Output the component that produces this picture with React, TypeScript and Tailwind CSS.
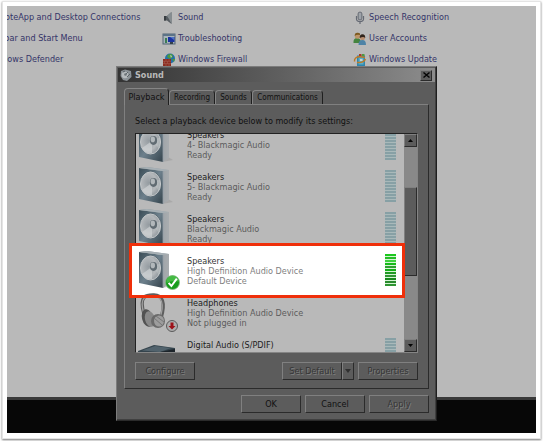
import type { ReactNode } from "react";

function SpeakerIcon() {
  return (
    <svg width="36" height="40" viewBox="0 0 36 40" aria-hidden="true">
      <defs>
        <linearGradient id="face" x1="0" y1="0" x2="1" y2="1">
          <stop offset="0" stopColor="#3a4c56" />
          <stop offset="0.5" stopColor="#6d808c" />
          <stop offset="1" stopColor="#34434c" />
        </linearGradient>
        <linearGradient id="side" x1="0" y1="0" x2="1" y2="0">
          <stop offset="0" stopColor="#7c878d" />
          <stop offset="1" stopColor="#a9adb0" />
        </linearGradient>
        <radialGradient id="cone" cx="0.4" cy="0.45" r="0.65">
          <stop offset="0" stopColor="#959ca1" />
          <stop offset="0.6" stopColor="#b4b8bb" />
          <stop offset="1" stopColor="#8a9298" />
        </radialGradient>
      </defs>
      <path d="M30 33 L35 36 L24 38 Z" fill="#8f8f8f" opacity="0.4" />
      <path d="M1 2 L9 1 L31 4 L31 34 L25 38 L25 5 Z" fill="url(#side)" />
      <path d="M1 2 L25 5 L25 38 L1 33 Z" fill="url(#face)" />
      <path d="M1 2 L9 1 L31 4 L25 5 Z" fill="#a7b0b5" />
      <path d="M25 5 L25 38" stroke="#94a0a7" strokeWidth="0.8" />
      <ellipse cx="13" cy="18" rx="10.5" ry="12.5" fill="#5a6871" />
      <ellipse cx="12.5" cy="18" rx="10" ry="12" fill="url(#cone)" stroke="#c3c7c9" strokeWidth="1" />
      <path d="M14 17 L4 24 A10 12 0 0 0 14 29 Z" fill="#d5d8da" opacity="0.6" />
      <path d="M15 17 L22 13 A10 12 0 0 1 21 25 Z" fill="#cfd3d5" opacity="0.35" />
      <ellipse cx="15.5" cy="16.5" rx="3.6" ry="4.4" fill="#606b72" />
      <ellipse cx="14.8" cy="15.4" rx="2.2" ry="2.8" fill="#b2b8bb" />
    </svg>
  );
}

function CheckBadge() {
  return (
    <svg className="absolute right-[-6px] bottom-0" width="15" height="15" viewBox="0 0 15 15" aria-hidden="true">
      <circle cx="7.5" cy="7.5" r="7" fill="#179c1c" stroke="#8ab88c" strokeWidth="0.8" />
      <path d="M1.5 6.5 A6 6 0 0 1 13.5 6.5 Q7 5 1.5 8 Z" fill="#58c754" opacity="0.7" />
      <path d="M3.6 7.8 L6.4 11 L11.8 3.6" fill="none" stroke="#fff" strokeWidth="2" />
    </svg>
  );
}

function HeadphonesIcon() {
  return (
    <svg width="40" height="40" viewBox="0 0 40 40" aria-hidden="true">
      <path d="M6 22 C0 2 10 3 16 3 C24 3 28 10 23 26" fill="none" stroke="#5e5e5e" strokeWidth="3.4" />
      <path d="M6 22 C0 3 10 4 16 4 C23 4 27 11 22 26" fill="none" stroke="#a2a2a2" strokeWidth="1.2" />
      <ellipse cx="9.500" cy="26" rx="5.500" ry="9" fill="#525252" transform="rotate(-14 9.500 26)" />
      <ellipse cx="12" cy="27" rx="5" ry="8" fill="#898989" transform="rotate(-14 12 27)" />
      <ellipse cx="20" cy="29" rx="7" ry="7" fill="#6a6a6a" />
      <ellipse cx="21" cy="29" rx="5" ry="5.500" fill="#9d9d9d" />
      <path d="M16 26 L24 33 M18 24 L26 30" stroke="#777" strokeWidth="1" />
      <circle cx="34" cy="34" r="5.500" fill="#adadad" stroke="#5b5b5b" strokeWidth="1" />
      <path d="M32.500 30.500 H35.500 V34 H37.500 L34 37.500 L30.500 34 H32.500 Z" fill="#9d1219" />
    </svg>
  );
}

function ReceiverIcon() {
  return (
    <svg width="38" height="40" viewBox="0 0 38 40" aria-hidden="true">
      <path d="M0 17 L16 11 L37 14 L37 18 L0 20 Z" fill="#35444d" />
      <path d="M4 16.500 L17 12 L33 14 L22 18 Z" fill="#52636d" />
      <path d="M0 18 L22 18 L37 15 V40 H0 Z" fill="#1d242a" />
    </svg>
  );
}

const idleBars = Array.from({ length: 11 }, () => "bg-[#87a0a5]");
const liveBars = [
  "bg-[#1cc81f]", "bg-[#25bd27]", "bg-[#3fd23f]", "bg-[#16bb19]", "bg-[#2f9f31]", "bg-[#12b016]",
  "bg-[#219a24]", "bg-[#2f9533]", "bg-[#17891b]", "bg-[#2a8a2e]", "bg-[#2e9432]",
];

function Meter({ live }: { live?: boolean }) {
  return (
    <div className={`flex h-8 w-[11px] flex-col justify-between ${live ? "bg-[#d4f5d4]" : "bg-[#a9b9ba]"}`} aria-hidden="true">
      {(live ? liveBars : idleBars).map((c, i) => (
        <span key={i} className={`h-[2px] w-full ${c}`} />
      ))}
    </div>
  );
}

type Device = { name: string; detail: string; status: string; icon: ReactNode; live?: boolean; meter?: boolean };

const devices: Device[] = [
  { name: "Speakers", detail: "4- Blackmagic Audio", status: "Ready", icon: <SpeakerIcon />, meter: true },
  { name: "Speakers", detail: "5- Blackmagic Audio", status: "Ready", icon: <SpeakerIcon />, meter: true },
  { name: "Speakers", detail: "Blackmagic Audio", status: "Ready", icon: <SpeakerIcon />, meter: true },
  { name: "Speakers", detail: "High Definition Audio Device", status: "Default Device", icon: <SpeakerIcon />, live: true, meter: true },
  { name: "Headphones", detail: "High Definition Audio Device", status: "Not plugged in", icon: <HeadphonesIcon /> },
  { name: "Digital Audio (S/PDIF)", detail: "", status: "", icon: <ReceiverIcon />, meter: true },
];

function DeviceRow({ device }: { device: Device }) {
  return (
    <li className="flex h-[42px] shrink-0 items-start gap-2 pr-2 pl-[2px]">
      <div className="relative h-10 w-10 shrink-0">
        <div className="relative w-[36px]">
          {device.icon}
          {device.live && <CheckBadge />}
        </div>
      </div>
      <div className="ml-px grow pt-[6px] leading-[10px] whitespace-nowrap">
        <p className={device.live ? "text-[#333]" : "text-[#1c1c1c]"}>{device.name}</p>
        <p className={device.live ? "text-[#808080]" : "text-[#5c5c5c]"}>{device.detail}</p>
        <p className={device.live ? "text-[#808080]" : "text-[#5c5c5c]"}>{device.status}</p>
      </div>
      {device.meter && (
        <div className="pt-1">
          <Meter live={device.live} />
        </div>
      )}
    </li>
  );
}

const raised = "border border-t-[#808080] border-l-[#808080] border-r-[#2b2b2b] border-b-[#2b2b2b] bg-[#5c5c5c]";

function PushButton({ children, disabled }: { children: ReactNode; disabled?: boolean }) {
  return (
    <button
      type="button"
      disabled={disabled}
      className={`h-[18px] w-[60px] leading-[10px] ${raised} ${disabled ? "text-[#363636] [text-shadow:1px_1px_0_#808080]" : "text-[#111]"}`}
    >
      {children}
    </button>
  );
}

function ScrollButton({ up }: { up?: boolean }) {
  return (
    <button type="button" aria-label={up ? "Scroll up" : "Scroll down"} className={`flex h-[13px] w-[13px] shrink-0 items-center justify-center ${raised}`}>
      <svg width="5" height="3" viewBox="0 0 5 3" aria-hidden="true">
        <path d={up ? "M0 3 L2.500 0 L5 3 Z" : "M0 0 L2.500 3 L5 0 Z"} fill="#050505" />
      </svg>
    </button>
  );
}

function SoundDialog() {
  return (
    <section
      aria-label="Sound"
      className="absolute top-[60px] left-[109px] w-[321px] border border-t-[#7c7c7c] border-r-[#1f1f1f] border-b-[#2b2b2b] border-l-[#7c7c7c] bg-[#5c5c5c] p-px shadow-[inset_-1px_-1px_0_#404040] text-[#111]"
    >
      <header className="flex h-[14px] items-center gap-[3px] bg-linear-to-r from-[#343434] to-[#8c8c8c] pr-[3px] pl-[2px]">
        <svg width="12" height="12" viewBox="0 0 12 12" aria-hidden="true">
          <path d="M1 2 L5 0.500 L11 2 L11.500 8 L7 12 L3 11 L0.500 7 Z" fill="#8b9297" />
          <circle cx="5" cy="6" r="3.300" fill="#b5babd" />
          <path d="M5 6 L8 3 M7 8 L10 5 M3 3 L5 2" stroke="#5b6368" strokeWidth="1" />
          <circle cx="5.500" cy="5.500" r="1.300" fill="#6b7378" />
        </svg>
        <h1 className="grow text-[9px] leading-[14px] font-bold text-[#b9b9b9]">Sound</h1>
        <button type="button" aria-label="Close" className={`flex h-[11px] w-3 items-center justify-center ${raised}`}>
          <svg width="7" height="6" viewBox="0 0 7 6" aria-hidden="true">
            <path d="M0.500 0.500 L6.500 5.500 M6.500 0.500 L0.500 5.500" stroke="#050505" strokeWidth="1.400" />
          </svg>
        </button>
      </header>

      <div className="px-[6px] pt-[6px] pb-[6px]">
        <div role="tablist" className="flex h-4 items-end text-[8px] leading-[10px]">
          <button type="button" role="tab" aria-selected="true" className="relative z-10 -mb-px h-[17px] w-[45px] rounded-t-sm border border-b-0 border-t-[#858585] border-r-[#1f1f1f] border-l-[#858585] bg-[#5c5c5c] pb-px text-[9px]">
            Playback
          </button>
          {[
            ["Recording", "w-[46px]"],
            ["Sounds", "w-[37px]"],
            ["Communications", "w-[71px]"],
          ].map(([label, width]) => (
            <button key={label} type="button" role="tab" aria-selected="false" className={`h-[14px] rounded-t-sm border border-b-0 border-t-[#858585] border-r-[#1f1f1f] border-l-[#858585] bg-[#5c5c5c] ${width}`}>
              {label}
            </button>
          ))}
        </div>

        <div role="tabpanel" className="border border-t-[#808080] border-r-[#2b2b2b] border-b-[#2b2b2b] border-l-[#808080] px-[10px] pt-[11px] pb-2">
          <p className="leading-[10px] whitespace-nowrap">Select a playback device below to modify its settings:</p>

          <div className="relative mt-[7px] flex h-[220px] border border-t-[#222] border-r-[#858585] border-b-[#858585] border-l-[#222] bg-[#b9b9b9]">
            <div className="absolute top-[110px] -left-[6px] h-[53px] w-[273px] bg-white" />
            <div className="relative grow overflow-hidden">
              <ul className="-mt-[10px] flex flex-col">
                {devices.map((device, i) => (
                  <DeviceRow key={i} device={device} />
                ))}
              </ul>
            </div>
            <div className="flex w-[13px] flex-col bg-[#898989]">
              <ScrollButton up />
              <div className="h-10" />
              <div className={`h-[89px] ${raised}`} />
              <div className="grow" />
              <ScrollButton />
            </div>
            <div className="absolute top-[109px] -left-[7px] h-[55px] w-[276px] border-[3px] border-[#ef2f0a]" />
          </div>

          <div className="mt-[9px] flex justify-between">
            <PushButton disabled>Configure</PushButton>
            <div className="flex gap-1">
              <div className="flex">
                <PushButton disabled>Set Default</PushButton>
                <button type="button" disabled aria-label="Set Default options" className={`flex h-[18px] w-3 items-center justify-center ${raised}`}>
                  <svg width="6" height="4" viewBox="0 0 6 4" aria-hidden="true">
                    <path d="M0 0 H6 L3 4 Z" fill="#303030" />
                  </svg>
                </button>
              </div>
              <PushButton disabled>Properties</PushButton>
            </div>
          </div>
        </div>

        <footer className="mt-[6px] flex justify-end gap-1">
          <PushButton>OK</PushButton>
          <PushButton>Cancel</PushButton>
          <PushButton disabled>Apply</PushButton>
        </footer>
      </div>
    </section>
  );
}

function SoundLinkIcon() {
  return (
    <svg width="14" height="14" viewBox="0 0 14 14" aria-hidden="true">
      <path d="M2 5 H5 L9.500 1 V13 L5 9.500 H2 Z" fill="#565c61" />
      <path d="M5 5 L9.500 1 V13 L7 8 Z" fill="#868d91" />
      <path d="M2 5 H4 V9.500 H2 Z" fill="#383d41" />
    </svg>
  );
}

function TroubleshootingIcon() {
  return (
    <svg width="14" height="14" viewBox="0 0 14 14" aria-hidden="true">
      <rect x="1" y="2" width="12" height="10" fill="#a8b3bb" stroke="#536676" />
      <rect x="1" y="2" width="12" height="2" fill="#5c7387" />
      <rect x="6" y="5" width="6.500" height="5" fill="#1932a0" />
      <path d="M8 5 H12 V8 Z" fill="#5073c4" />
      <path d="M8 10 H11 V12 H8 Z" fill="#34404a" />
      <path d="M3 6 H5 V11 H3 Z" fill="#3b7c55" />
    </svg>
  );
}

function FirewallIcon() {
  return (
    <svg width="14" height="14" viewBox="0 0 14 14" aria-hidden="true">
      <circle cx="8" cy="5.500" r="5" fill="#2470aa" />
      <path d="M6 1.500 L10 1 L11 4 L8 6 L5 4 Z M10 6 L13 6 L12 9 Z" fill="#4c9a3b" />
      <path d="M8 2 L10 3 L9 5 Z" fill="#b6c7cf" />
      <rect x="1" y="6" width="8" height="7" fill="#8b2c20" />
      <path d="M1 8.300 H9 M1 10.600 H9 M4 6 V8.300 M7 6 V8.300 M2.500 8.300 V10.600 M5.500 8.300 V10.600 M4 10.600 V13 M7 10.600 V13" stroke="#b07468" strokeWidth="0.400" />
    </svg>
  );
}

function SpeechIcon() {
  return (
    <svg width="14" height="14" viewBox="0 0 14 14" aria-hidden="true">
      <rect x="5" y="1" width="4" height="8" rx="2" fill="#8d9299" stroke="#5a5f68" strokeWidth="0.700" />
      <path d="M3.500 5 V8 Q3.500 10.500 7 10.500 Q10.500 10.500 10.500 8 V5 M7 10.500 V13" fill="none" stroke="#656a74" strokeWidth="1.200" />
      <path d="M7 2 V8" stroke="#b9bcc0" strokeWidth="0.800" />
    </svg>
  );
}

function UsersIcon() {
  return (
    <svg width="14" height="14" viewBox="0 0 14 14" aria-hidden="true">
      <path d="M0.500 11 Q0 6 4.500 6 Q8 6.500 8 11 Z" fill="#45843f" />
      <circle cx="4.500" cy="4" r="2.700" fill="#bd9569" />
      <path d="M1.700 4 Q1.700 0.500 4.500 0.700 Q7.500 0.500 7 3 Q4 2 1.700 4 Z" fill="#7d5a20" />
      <path d="M5.500 13 Q5.500 8 9.500 8 Q13 8 13 13 Z" fill="#4e83a6" />
      <circle cx="9.500" cy="5.500" r="2.600" fill="#b98e70" />
      <path d="M6.800 6 Q6.500 2.200 9.500 2.300 Q12.500 2.500 12.200 6 Q10.500 4 6.800 6 Z" fill="#30251d" />
    </svg>
  );
}

function UpdateIcon() {
  return (
    <svg width="14" height="14" viewBox="0 0 14 14" aria-hidden="true">
      <rect x="4" y="2.500" width="8" height="10.500" fill="#2f86ae" />
      <rect x="5.500" y="4.500" width="5" height="7" fill="#5badc8" />
      <path d="M1.500 8.500 Q1 4 7 3.500 L12 4.500 M12.500 6 Q11 10 4 9.500" fill="none" stroke="#bd7b27" strokeWidth="1.400" />
      <path d="M6 1 H8.500 V3 H6 Z" fill="#a53c28" />
      <path d="M9 1 H11.500 V3 H9 Z" fill="#4e9a3e" />
      <path d="M7 6 H9.500 V8 H7 Z" fill="#c2d4da" />
    </svg>
  );
}

const links: { label: string; icon: ReactNode }[] = [
  { label: "RemoteApp and Desktop Connections", icon: <TroubleshootingIcon /> },
  { label: "Sound", icon: <SoundLinkIcon /> },
  { label: "Speech Recognition", icon: <SpeechIcon /> },
  { label: "Taskbar and Start Menu", icon: <TroubleshootingIcon /> },
  { label: "Troubleshooting", icon: <TroubleshootingIcon /> },
  { label: "User Accounts", icon: <UsersIcon /> },
  { label: "Windows Defender", icon: <FirewallIcon /> },
  { label: "Windows Firewall", icon: <FirewallIcon /> },
  { label: "Windows Update", icon: <UpdateIcon /> },
];

export default function App() {
  return (
    <div className="bg-white px-[2px] pt-px pb-[2px] font-['DejaVu_Sans_Condensed','DejaVu_Sans',sans-serif] text-[9px]">
      <div className="border border-[#e4e4e4] bg-white px-1 pt-1 pb-[5px] shadow-[0_1px_2px_#777]">
        <main className="relative overflow-hidden">
          <div className="h-[391px] bg-[#b9b9b9]">
            <nav className="-ml-[36px] grid grid-cols-[191px_191px_191px] gap-y-px">
              {links.map(({ label, icon }) => (
                <a key={label} href="#" className="flex h-5 items-center gap-[2px] pt-1 whitespace-nowrap text-[#343468]">
                  {icon}
                  {label}
                </a>
              ))}
            </nav>
          </div>
          <div className="h-9 border-t-[3px] border-[#3a3a3a] bg-[#070707]" />
          <SoundDialog />
        </main>
      </div>
    </div>
  );
}
